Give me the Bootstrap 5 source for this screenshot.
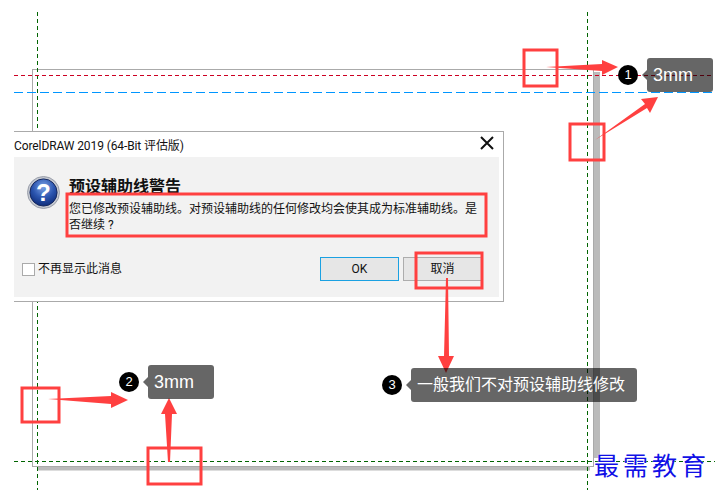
<!DOCTYPE html>
<html lang="zh-CN">
<head>
<meta charset="utf-8">
<title>预设辅助线警告</title>
<link href="https://cdn.jsdelivr.net/npm/bootstrap@5.3.0/dist/css/bootstrap.min.css" rel="stylesheet">
<style>
body{background:#fff;margin:0;overflow:hidden;font-family:"Roboto","Noto Sans CJK SC",sans-serif;}
.stage{position:relative;width:715px;height:496px;overflow:hidden;}
.layer{position:absolute;left:0;top:0;width:715px;height:496px;}
.win{position:absolute;left:14px;top:131px;width:490px;height:171px;background:#fff;border:1px solid #aaa;border-left:0;display:flex;flex-direction:column;font-size:12px;color:#111;}
.win-title{height:25px;padding-top:4px;line-height:20px;font-size:12px;letter-spacing:-.1px;white-space:nowrap;}
.win-close{position:absolute;right:9px;top:4px;width:14px;height:14px;}
.win-body{flex:1;background:#f2f2f2;margin:0 4px 4px 0;display:flex;flex-direction:column;padding:20px 0 16px 8px;}
.msg-icon{width:33px;height:33px;flex:none;margin:-1px 9px 0 5px;}
.msg-head{font-size:16px;font-weight:700;line-height:20px;color:#111;margin-bottom:4px;}
.msg-text{width:412px;line-height:16px;font-size:12px;color:#111;}
.chk{width:13px;height:13px;background:#fff;border:1px solid #aaa;margin-right:3px;flex:none;}
.foot-row{margin-top:auto;padding-right:17px;}
.win-btn{width:79px;height:24px;padding:0;font-size:12px;line-height:22px;border-radius:0;background:#e6e6e6;color:#111;border:1px solid #adadad;}
.win-btn.is-def{border-color:#1ba1e2;}
.tip{position:absolute;height:34px;background:rgba(0,0,0,.6);color:#fff;border-radius:3px;font-size:18px;line-height:34px;padding-left:6px;white-space:nowrap;font-family:"Liberation Sans","Noto Sans CJK SC",sans-serif;}
.tip::before{content:"";position:absolute;left:-5px;top:12px;border:5px solid transparent;border-left:0;border-right-color:rgba(0,0,0,.6);}
.tip-a{left:647px;top:58px;width:66px;}
.tip-b{left:148px;top:365px;width:66px;}
.tip-c{left:411px;top:368px;width:226px;font-size:16px;}
.num{position:absolute;width:20px;height:20px;border-radius:50%;background:#000;color:#fff;font-size:13px;line-height:20px;text-align:center;font-family:"Liberation Sans",sans-serif;}
.num-a{left:618px;top:65px;}
.num-b{left:119px;top:372px;}
.num-c{left:382px;top:375px;}
.stamp{position:absolute;left:594px;top:445px;font-size:25px;line-height:38px;letter-spacing:4px;color:#1010e6;white-space:nowrap;text-shadow:0 0 2px #fff;font-family:"Noto Sans CJK SC",sans-serif;}
</style>
</head>
<body>
<div class="stage">
  <svg class="layer" viewBox="0 0 715 496" aria-hidden="true">
    <rect x="593" y="72" width="7" height="386" fill="#bbb"/>
    <rect x="38" y="466" width="552" height="4.500" fill="#bbb"/>
    <rect x="32.500" y="69.500" width="561" height="397" fill="none" stroke="#aaa"/>
    <g fill="none" stroke-width="1">
      <path d="M37.500 12V490M587.500 12V490" stroke="#006400" stroke-dasharray="4 3"/>
      <path d="M14 75.500H712" stroke="#cc0022" stroke-dasharray="4 3"/>
      <path d="M14 92.500H714" stroke="#0096ff" stroke-dasharray="9 4"/>
      <path d="M14 461.500H715" stroke="#006400" stroke-dasharray="4 3"/>
    </g>
  </svg>

  <div class="win">
    <div class="win-title">CorelDRAW 2019 (64-Bit 评估版)</div>
    <svg class="win-close" viewBox="0 0 14 14" aria-hidden="true"><path d="M1 1L13 13M13 1L1 13" stroke="#111" stroke-width="2" fill="none"/></svg>
    <div class="win-body">
      <div class="d-flex">
        <svg class="msg-icon" viewBox="0 0 34 34" aria-hidden="true">
          <defs><radialGradient id="qb" cx="50%" cy="30%" r="70%"><stop offset="0" stop-color="#7ea4e6"/><stop offset=".55" stop-color="#2c56b0"/><stop offset="1" stop-color="#0e2c7a"/></radialGradient></defs>
          <circle cx="17" cy="17" r="16.500" fill="#c4c8d0" stroke="#8a909c" stroke-width=".8"/>
          <circle cx="17" cy="17" r="14" fill="url(#qb)" stroke="#16275c" stroke-width="1"/>
          <text x="17" y="26" text-anchor="middle" font-family="Liberation Sans" font-weight="700" font-size="25" fill="#fff">?</text>
        </svg>
        <div>
          <div class="msg-head">预设辅助线警告</div>
          <div class="msg-text">您已修改预设辅助线。对预设辅助线的任何修改均会使其成为标准辅助线。是否继续 ?</div>
        </div>
      </div>
      <div class="d-flex align-items-center foot-row">
        <span class="chk"></span><span class="flex-grow-1">不再显示此消息</span>
        <button type="button" class="btn win-btn is-def me-1">OK</button>
        <button type="button" class="btn win-btn">取消</button>
      </div>
    </div>
  </div>

  <svg class="layer" viewBox="0 0 715 496" aria-hidden="true">
    <g fill="none" stroke="#ff4040" stroke-width="3">
      <rect x="524" y="50" width="33" height="36"/>
      <rect x="570" y="124" width="34" height="36"/>
      <rect x="67" y="194" width="419" height="42"/>
      <rect x="416" y="253" width="66" height="35"/>
      <rect x="22" y="388" width="37" height="34"/>
      <rect x="148" y="448" width="53" height="36"/>
    </g>
    <g fill="#ff4040">
      <path d="M546 67L602 64V60L618 67L602 75V71Z"/>
      <path d="M595 140L645 104L641 99L658 97L650 113L647 108Z"/>
      <path d="M446 278L448 278L449 356L454 356L446 373L438 356L444 356Z"/>
      <path d="M48 399L111 396V392L128 400L111 408V404Z"/>
      <path d="M168 462L165 414H161L169 398L177 414H172L170 462Z"/>
    </g>
  </svg>

  <span class="num num-a">1</span><div class="tip tip-a">3mm</div>
  <span class="num num-b">2</span><div class="tip tip-b">3mm</div>
  <span class="num num-c">3</span><div class="tip tip-c">一般我们不对预设辅助线修改</div>
  <div class="stamp">最需教育</div>
</div>
<script src="https://cdn.jsdelivr.net/npm/bootstrap@5.3.0/dist/js/bootstrap.bundle.min.js"></script>
</body>
</html>
